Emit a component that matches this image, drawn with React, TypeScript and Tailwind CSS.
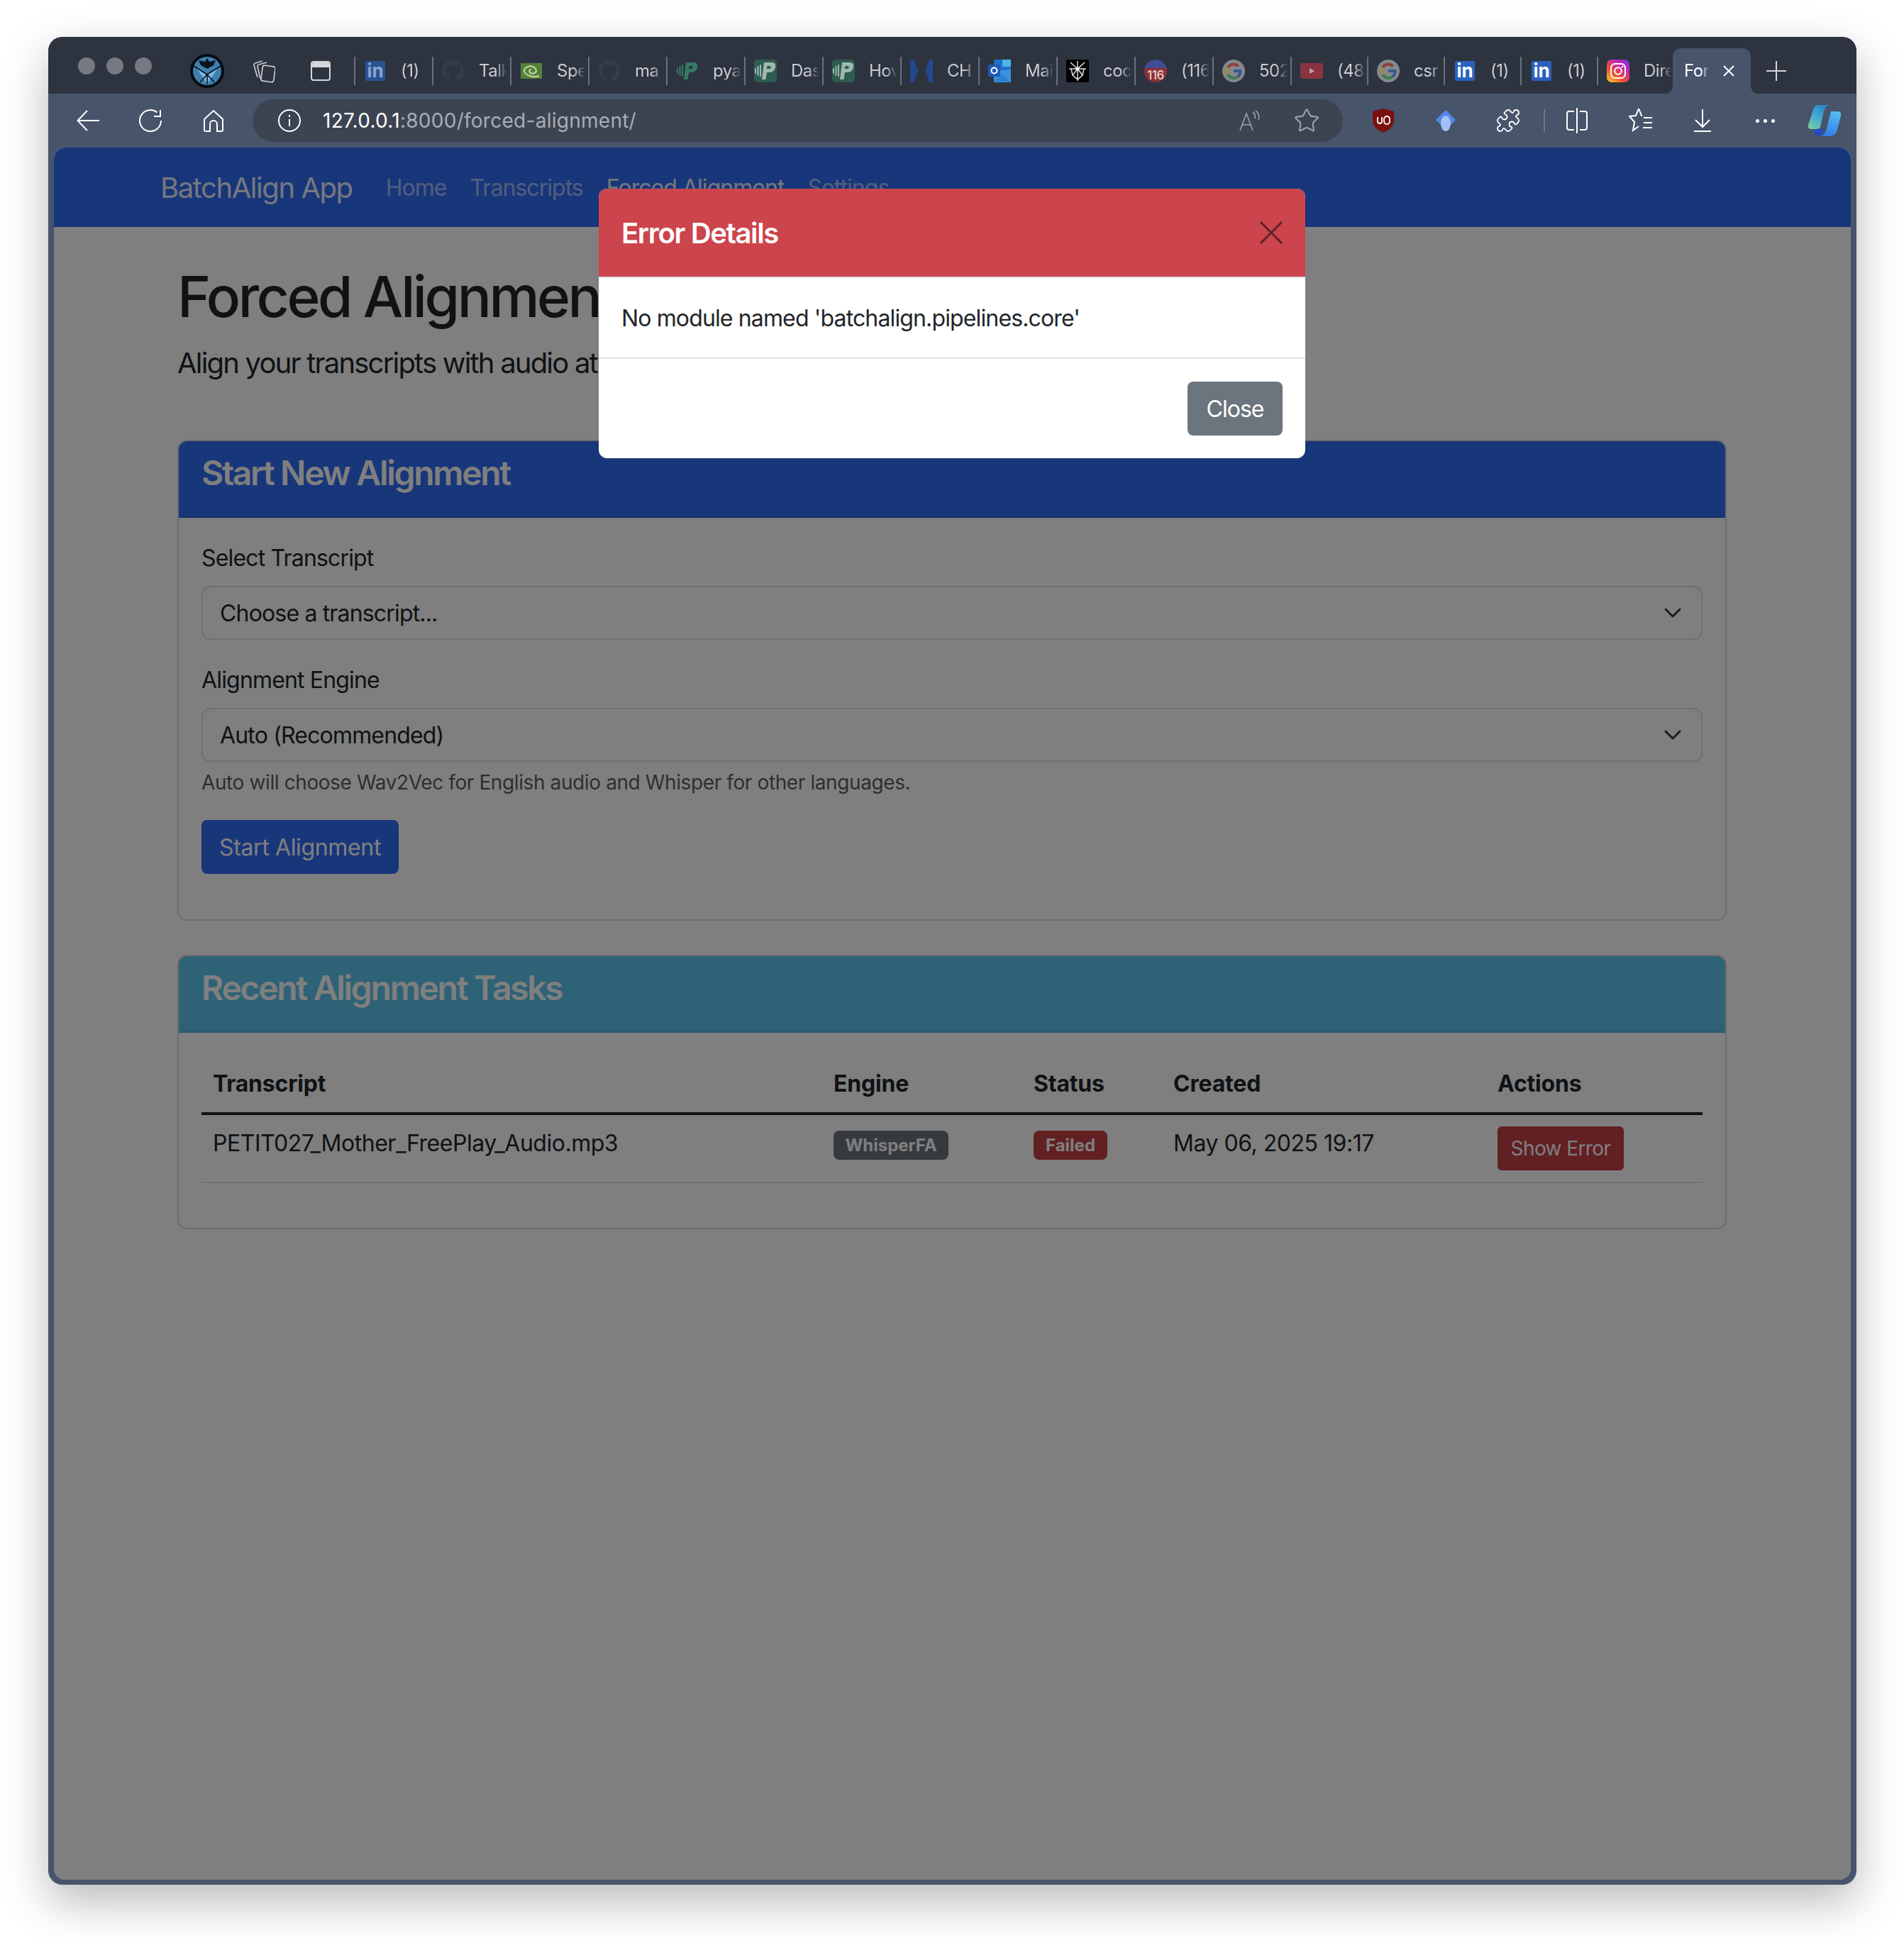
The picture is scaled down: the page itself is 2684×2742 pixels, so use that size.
import { FaGithub } from "react-icons/fa";
import { Puzzle, Star } from "lucide-react";
import type { ReactNode } from "react";

const sansFont = "font-['Inter','Liberation_Sans',sans-serif]";

function LinkedIn({ dim }: { dim?: boolean }) {
  return (
    <div
      className={
        dim
          ? "flex h-[28px] w-[28px] items-center justify-center rounded-[2px] bg-[#2b5292] text-[26px] font-bold leading-none tracking-normal text-[#8aa5cf]"
          : "flex h-[28px] w-[28px] items-center justify-center rounded-[2px] bg-[#2a62bc] text-[26px] font-bold leading-none tracking-normal text-white"
      }
    >
      in
    </div>
  );
}

function Nvidia() {
  return (
    <svg width="30" height="22" viewBox="0 0 30 22">
      <rect width="30" height="22" fill="#55803a" />
      <path d="M26 18C15 22 4 15 5 10 7 4 16 2 21 8c3 5-3 8-7 6-3-2-2-5 1-5" fill="none" stroke="#c3dca3" strokeWidth="2" />
    </svg>
  );
}

function PLogo({ tile }: { tile?: boolean }) {
  return (
    <svg width="32" height="32" viewBox="0 0 32 32">
      {tile && <rect width="32" height="32" rx="5" fill="#2f5c50" />}
      <g fill={tile ? "#9fb8ad" : "#347a63"}>
        <path
          fillRule="evenodd"
          d="M14 4h11c4 0 6 3 5 7s-4 7-8 7h-4l-1.5 10H11l3-24zm4.5 5l-.8 4h4.3c2 0 2.5-4 .5-4z"
        />
        <rect x="1" y="12" width="2" height="8" rx="1" />
        <rect x="4.5" y="9" width="2" height="14" rx="1" />
        <rect x="8" y="7" width="2" height="17" rx="1" />
      </g>
    </svg>
  );
}

function SplitBlue() {
  return (
    <svg width="32" height="32" viewBox="0 0 32 32">
      <path d="M0 0h6l3 12 3 5-4 5-2 10H0z" fill="#24478f" />
      <path d="M32 0h-5l-4 12-2 5 3 5 3 10h5z" fill="#24478f" />
    </svg>
  );
}

function Outlook() {
  return (
    <svg width="32" height="32" viewBox="0 0 32 32">
      <rect x="8" y="0" width="24" height="30" rx="2" fill="#1f6fc5" />
      <rect x="20" y="0" width="12" height="10" fill="#4fb6ec" />
      <path d="M8 16l24-2v18H8z" fill="#3d93dd" />
      <path d="M8 30l12-10 12 12z" fill="#2a83d1" />
      <rect x="0" y="7" width="17" height="17" rx="2" fill="#1c5bb8" />
      <circle cx="8.5" cy="15.5" r="4" fill="none" stroke="#fff" strokeWidth="2" />
    </svg>
  );
}

function SpiderTile() {
  return (
    <svg width="32" height="32" viewBox="0 0 32 32">
      <rect width="32" height="32" rx="2" fill="#000" />
      <g fill="none" stroke="#e8e8e8" strokeWidth="1.4">
        <path d="M16 2v28M6 4l10 9 10-9M4 13h24M7 13l2 9 7 6 7-6 2-9M9 22l7-9 7 9" />
      </g>
      <circle cx="16" cy="13" r="2.6" fill="#fff" />
    </svg>
  );
}

function Badge116() {
  return (
    <div className="relative h-[32px] w-[32px] overflow-hidden rounded-full bg-[#3f4d95]">
      <div className="absolute bottom-0 left-0 flex h-[20px] w-full items-center justify-center rounded-b-[14px] bg-[#8c3034] text-[17px] font-medium leading-none tracking-[-0.5px] text-[#e8d4d4]">
        116
      </div>
    </div>
  );
}

function GoogleG() {
  return (
    <svg width="32" height="32" viewBox="0 0 32 32" fill="none" strokeWidth="4">
      <circle cx="16" cy="16" r="16" fill="#85888e" />
      <path d="M22.5 9.5A9.5 9.5 0 0 0 8 11" stroke="#8a4038" />
      <path d="M8 11a9.5 9.5 0 0 0 0 10" stroke="#9c8c3c" />
      <path d="M8 21a9.5 9.5 0 0 0 14 3" stroke="#3f7a4e" />
      <path d="M22 24a9.5 9.5 0 0 0 3.5-8H16" stroke="#35588f" />
    </svg>
  );
}

function YouTube() {
  return (
    <svg width="32" height="22" viewBox="0 0 32 22">
      <rect width="32" height="22" rx="4" fill="#8b3340" />
      <path d="M13 7l7 4-7 4z" fill="#c5a0a5" />
    </svg>
  );
}

function Instagram() {
  return (
    <svg width="32" height="32" viewBox="0 0 32 32">
      <defs>
        <linearGradient id="ig" x1="0.1" y1="1" x2="0.9" y2="0">
          <stop offset="0" stopColor="#fdc72f" />
          <stop offset="0.35" stopColor="#f0512f" />
          <stop offset="0.7" stopColor="#c928b0" />
          <stop offset="1" stopColor="#7a35e0" />
        </linearGradient>
      </defs>
      <rect width="32" height="32" rx="7" fill="url(#ig)" />
      <rect x="6" y="6" width="20" height="20" rx="5.5" fill="none" stroke="#fff" strokeWidth="2" />
      <circle cx="16" cy="16" r="4.8" fill="none" stroke="#fff" strokeWidth="2" />
      <circle cx="22" cy="10" r="1.3" fill="#fff" />
    </svg>
  );
}

function GithubDark() {
  return <FaGithub className="h-[32px] w-[32px] text-[#353c48]" />;
}

type TabItem = { icon: ReactNode; label: string; narrow?: boolean };

const tabs: TabItem[] = [
  { icon: <LinkedIn dim />, label: "(1)" },
  { icon: <GithubDark />, label: "Talk" },
  { icon: <Nvidia />, label: "Spe" },
  { icon: <GithubDark />, label: "ma" },
  { icon: <PLogo />, label: "pya" },
  { icon: <PLogo tile />, label: "Das" },
  { icon: <PLogo tile />, label: "Hov" },
  { icon: <SplitBlue />, label: "CH" },
  { icon: <Outlook />, label: "Mai" },
  { icon: <SpiderTile />, label: "coo" },
  { icon: <Badge116 />, label: "(116" },
  { icon: <GoogleG />, label: "502" },
  { icon: <YouTube />, label: "(48", narrow: true },
  { icon: <GoogleG />, label: "csr", narrow: true },
  { icon: <LinkedIn />, label: "(1)", narrow: true },
  { icon: <LinkedIn />, label: "(1)", narrow: true },
  { icon: <Instagram />, label: "Dire", narrow: true },
];

function Tab({ tab }: { tab: TabItem }) {
  return (
    <div
      className={
        tab.narrow
          ? "flex h-[40px] w-[108px] shrink-0 items-center border-l-2 border-[#6a717d] pl-[12px]"
          : "flex h-[40px] w-[110px] shrink-0 items-center border-l-2 border-[#6a717d] pl-[12px]"
      }
    >
      <div className="flex w-[32px] shrink-0 justify-center">{tab.icon}</div>
      <div className="ml-[20px] w-[40px] overflow-hidden whitespace-nowrap text-[24px] leading-none tracking-[-0.5px] text-[#c9ccd1] [mask-image:linear-gradient(to_right,black_60%,transparent)]">
        {tab.label}
      </div>
    </div>
  );
}

function TabStrip() {
  return (
    <div className="flex h-[80px] shrink-0 items-center bg-[#2d3440] pt-[16px]">
      <div className="mb-[14px] ml-[42px] flex gap-[16px]">
        <div className="h-[24px] w-[24px] rounded-full bg-[#757982]" />
        <div className="h-[24px] w-[24px] rounded-full bg-[#757982]" />
        <div className="h-[24px] w-[24px] rounded-full bg-[#757982]" />
      </div>
      <svg className="ml-[54px] shrink-0" width="48" height="48" viewBox="0 0 48 48">
        <circle cx="24" cy="24" r="24" fill="#060a12" />
        <circle cx="24" cy="24" r="20" fill="#3f7fae" />
        <path d="M24 6l3 5 9-2-3 7-9 5-9-5-3-7 9 2z" fill="#0b1420" />
        <path d="M9 20l15 22 15-22-15 9z" fill="#7dbbe2" />
        <path d="M24 29v14M5 17l19 12 19-12M14 40l10-11 10 11" stroke="#0b1420" strokeWidth="1.6" fill="none" />
      </svg>
      <svg className="ml-[40px] shrink-0" width="32" height="34" viewBox="0 0 32 34" fill="none" stroke="#c9ccd1" strokeWidth="1.7">
        <rect x="13" y="10" width="18" height="22" rx="3" transform="rotate(8 22 21)" />
        <path d="M7 26L2 9c0-2 1-3 2-3l10-3M11 28L7 11c0-2 1-3 2-3l11-3" />
      </svg>
      <div className="ml-[50px] h-[28px] w-[28px] shrink-0 overflow-hidden rounded-[4px] border-2 border-[#d5d7da]">
        <div className="h-[7px] bg-[#d5d7da]" />
      </div>
      <div className="ml-[33px] flex">
        {tabs.map((tab, i) => (
          <Tab key={i} tab={tab} />
        ))}
      </div>
      <div className="relative ml-[-1px] flex h-[64px] w-[110px] shrink-0 items-center rounded-t-[12px] bg-[#47546a] pl-[16px]">
        <span className="absolute bottom-0 left-[-10px] h-[10px] w-[10px] bg-[radial-gradient(circle_at_0_0,transparent_9.5px,#47546a_10px)]" />
        <span className="absolute bottom-0 right-[-10px] h-[10px] w-[10px] bg-[radial-gradient(circle_at_100%_0,transparent_9.5px,#47546a_10px)]" />
        <div className="w-[36px] overflow-hidden whitespace-nowrap text-[24px] leading-none tracking-[-0.5px] text-white [mask-image:linear-gradient(to_right,black_65%,transparent)]">
          Forc
        </div>
        <svg className="ml-[18px]" width="18" height="18" viewBox="0 0 18 18" stroke="#fff" strokeWidth="2">
          <path d="M2 2l14 14M16 2L2 16" />
        </svg>
      </div>
      <svg className="ml-[22px]" width="28" height="28" viewBox="0 0 28 28" stroke="#d5d7da" strokeWidth="2">
        <path d="M14 0v28M0 14h28" />
      </svg>
    </div>
  );
}

function Toolbar() {
  return (
    <div className="flex h-[76px] shrink-0 items-center bg-[#47546a]">
      <svg className="ml-[40px] shrink-0" width="32" height="30" viewBox="0 0 32 30" fill="none" stroke="#fff" strokeWidth="2">
        <path d="M32 15H1.5M15 1L1.5 15 15 29" />
      </svg>
      <svg className="ml-[56px] shrink-0" width="32" height="32" viewBox="0 0 32 32" fill="none" stroke="#fff" strokeWidth="2">
        <path d="M25.5 4.5A15 15 0 1 0 31 16M21 10h9V1" />
      </svg>
      <svg className="ml-[58px] shrink-0" width="30" height="32" viewBox="0 0 30 32" fill="none" stroke="#fff" strokeWidth="2">
        <path d="M2 14L15 2l13 12v15a2 2 0 0 1-2 2h-6V21a5 5 0 0 0-10 0v10H4a2 2 0 0 1-2-2z" />
      </svg>
      <div className="ml-[40px] flex h-[60px] w-[1537px] shrink-0 items-center rounded-full bg-[#3c4452] pl-[36px] pr-[32px]">
        <svg width="32" height="32" viewBox="0 0 32 32" fill="none" stroke="#fff" strokeWidth="2">
          <circle cx="16" cy="16" r="15" />
          <path d="M16 14v10M16 8v3" />
        </svg>
        <div className="ml-[31px] text-[28px] leading-none tracking-[0.27px] text-[#a9adb3]">
          <span className="text-white">127.0.0.1</span>:8000/forced-alignment/
        </div>
        <svg className="ml-auto" width="30" height="30" viewBox="0 0 30 30" fill="none" stroke="#9ea2a8" strokeWidth="1.6">
          <path d="M1 29L10 5l9 24M4 21h12M19 3c3 2 4 5 3 9M23 1c4 3 6 8 4 13" />
        </svg>
        <Star className="ml-[46px] shrink-0 text-[#9ea2a8]" size={38} strokeWidth={1.3} />
      </div>
      <svg className="ml-[42px] shrink-0" width="30" height="34" viewBox="0 0 30 34">
        <path d="M15 0l15 4v13c0 8-7 14-15 17C7 31 0 25 0 17V4z" fill="#7a1010" />
        <path d="M7 12v6a3 3 0 0 0 6 0v-6M16 15a4 4 0 1 1 8 0v3a4 4 0 1 1-8 0z" fill="none" stroke="#fff" strokeWidth="1.8" />
      </svg>
      <svg className="ml-[59px] shrink-0" width="28" height="30" viewBox="0 0 28 30">
        <path d="M14 0l14 14-14 14L0 14z" fill="#5586e8" />
        <ellipse cx="14" cy="19" rx="7" ry="11" fill="#a4c0f4" />
      </svg>
      <Puzzle className="ml-[56px] shrink-0 text-white" size={36} strokeWidth={1.2} />
      <div className="ml-[32px] h-[32px] w-[2px] shrink-0 bg-[#717a8a]" />
      <svg className="ml-[30px] shrink-0" width="30" height="36" viewBox="0 0 30 36" fill="none" stroke="#fff" strokeWidth="2">
        <path d="M11 5H4a3 3 0 0 0-3 3v20a3 3 0 0 0 3 3h7M19 5h7a3 3 0 0 1 3 3v20a3 3 0 0 1-3 3h-7M15 0v36" />
      </svg>
      <svg className="ml-[58px] shrink-0" width="34" height="36" viewBox="0 0 34 36" fill="none" stroke="#fff" strokeWidth="2">
        <path d="M14 1l4 10h-1M14 1L10 11 1 12l7 8-2 12 8-6M21 14h12M21 21h12M20 28h13" />
      </svg>
      <svg className="ml-[58px] shrink-0" width="24" height="32" viewBox="0 0 24 32" fill="none" stroke="#fff" strokeWidth="2">
        <path d="M12 0v25M2 15l10 10 10-10M0 31h24" />
      </svg>
      <div className="ml-[63px] flex w-[27px] shrink-0 justify-between">
        <div className="h-[5px] w-[5px] rounded-full bg-white" />
        <div className="h-[5px] w-[5px] rounded-full bg-white" />
        <div className="h-[5px] w-[5px] rounded-full bg-white" />
      </div>
      <svg className="ml-[46px] shrink-0" width="48" height="44" viewBox="0 0 48 44">
        <defs>
          <linearGradient id="cp1" x1="0" y1="1" x2="0.6" y2="0">
            <stop offset="0" stopColor="#7fd39a" />
            <stop offset="0.55" stopColor="#46a9d6" />
            <stop offset="1" stopColor="#2b88c4" />
          </linearGradient>
          <linearGradient id="cp2" x1="0.4" y1="1" x2="0.7" y2="0">
            <stop offset="0" stopColor="#2f7fe8" />
            <stop offset="1" stopColor="#55bdf0" />
          </linearGradient>
        </defs>
        <path d="M14 0h19c-5 0-8 3-10 9l-5 22c-1 2-3 3-6 3H5c-3 0-5-3-4-6L8 7c1-4 3-7 6-7z" fill="url(#cp1)" />
        <path d="M17 44h14c6 0 9-3 11-9l5-20c1-4-1-6-5-6h-9l-6 24c-1 6-5 11-10 11z" fill="url(#cp2)" />
        <path d="M17 44c3-2 5-5 6-10H9c0 5 3 10 8 10z" fill="#2949c9" />
      </svg>
    </div>
  );
}

function CardHeader({ title, info }: { title: string; info?: boolean }) {
  return (
    <div
      className={
        info
          ? "rounded-t-[12px] border-b-2 border-[#54afd2] bg-[#5cc4ec] px-[32px] pb-[32px] pt-[16px]"
          : "rounded-t-[12px] border-b-2 border-[#2a60d8] bg-[#306cf4] px-[32px] pb-[32px] pt-[16px]"
      }
    >
      <h4 className="text-[48px] font-semibold leading-[58px] tracking-[-0.048em] text-white">{title}</h4>
    </div>
  );
}

function SelectBox({ value }: { value: string }) {
  return (
    <div className="flex h-[76px] items-center justify-between rounded-[12px] border-2 border-[#dee2e6] bg-white pl-[24px] pr-[24px] text-[32px] tracking-[-0.026em] text-[#212529]">
      <span className="pt-[2px]">{value}</span>
      <svg width="32" height="32" viewBox="0 0 16 16" fill="none" stroke="#343a40" strokeWidth="1.5" strokeLinecap="round" strokeLinejoin="round">
        <path d="M3 5.5l5 5 5-5" />
      </svg>
    </div>
  );
}

function AlignmentForm() {
  return (
    <div className="rounded-[14px] border-2 border-[#d8d8d8] bg-white">
      <CardHeader title="Start New Alignment" />
      <div className="p-[32px]">
        <div className="mb-[14px] text-[32px] leading-[50px] tracking-[-0.026em]">Select Transcript</div>
        <div className="mb-[32px]">
          <SelectBox value="Choose a transcript..." />
        </div>
        <div className="mb-[14px] text-[32px] leading-[50px] tracking-[-0.026em]">Alignment Engine</div>
        <SelectBox value="Auto (Recommended)" />
        <div className="mb-[32px] mt-[8px] text-[28px] leading-[42px] tracking-[-0.014em] text-[#212529]/75">
          Auto will choose Wav2Vec for English audio and Whisper for other languages.
        </div>
        <div className="mb-[32px] flex h-[76px] w-[278px] items-center justify-center rounded-[8px] bg-[#306cf4] pt-[2px] text-[32px] text-white">
          Start Alignment
        </div>
      </div>
    </div>
  );
}

function TasksTable() {
  return (
    <div className="mt-[48px] rounded-[14px] border-2 border-[#d8d8d8] bg-white">
      <CardHeader title="Recent Alignment Tasks" info />
      <div className="p-[32px]">
        <table className="mb-[31px] w-full table-fixed border-collapse text-[32px] leading-[48px] tracking-[-0.015em]">
          <thead>
            <tr className="border-b-4 border-[#212529] text-left tracking-[-0.2px]">
              <th className="w-[875px] p-[16px] font-bold">Transcript</th>
              <th className="w-[282px] p-[16px] font-bold">Engine</th>
              <th className="w-[197px] p-[16px] font-bold">Status</th>
              <th className="w-[457px] p-[16px] font-bold">Created</th>
              <th className="p-[16px] font-bold">Actions</th>
            </tr>
          </thead>
          <tbody>
            <tr className="border-b-2 border-[#dee2e6] align-top">
              <td className="p-[16px]">PETIT027_Mother_FreePlay_Audio.mp3</td>
              <td className="p-[16px]">
                <span className="mt-[6px] flex h-[41px] w-[162px] items-center justify-center rounded-[8px] bg-[#6c757d] text-[24px] font-bold leading-none tracking-normal text-white">
                  WhisperFA
                </span>
              </td>
              <td className="p-[16px]">
                <span className="mt-[6px] flex h-[41px] w-[104px] items-center justify-center rounded-[8px] bg-[#c44046] text-[24px] font-bold leading-none tracking-normal text-white">
                  Failed
                </span>
              </td>
              <td className="p-[16px]">May 06, 2025 19:17</td>
              <td className="p-[16px]">
                <div className="flex h-[62px] w-[178px] items-center justify-center rounded-[6px] bg-[#c44046] text-[28px] leading-none tracking-[-0.6px] text-white">
                  Show Error
                </div>
              </td>
            </tr>
          </tbody>
        </table>
      </div>
    </div>
  );
}

function ErrorModal() {
  return (
    <div className="absolute inset-0 flex justify-center pr-[1px] pt-[58px]">
      <div className="h-[380px] w-[996px] overflow-hidden rounded-[12px] bg-white">
        <div className="flex h-[126px] items-center justify-between border-b-2 border-[#dee2e6] bg-[#cc444c] pl-[32px] pr-[32px]">
          <div className="pt-[2px] text-[40px] font-semibold leading-none tracking-[-0.034em] text-white">Error Details</div>
          <svg width="32" height="32" viewBox="0 0 32 32" stroke="#5e2227" strokeWidth="3">
            <path d="M1 1l30 30M31 1L1 31" />
          </svg>
        </div>
        <div className="flex h-[114px] items-center border-b-2 border-[#dee2e6] px-[32px] pt-[2px] text-[32px] tracking-[-0.027em] text-[#212529]">
          No module named 'batchalign.pipelines.core'
        </div>
        <div className="flex justify-end px-[32px] pt-[32px]">
          <div className="flex h-[76px] w-[134px] items-center justify-center rounded-[8px] bg-[#6c757d] pt-[2px] text-[32px] tracking-[-0.03em] text-white">
            Close
          </div>
        </div>
      </div>
    </div>
  );
}

export default function App() {
  return (
    <div className={`${sansFont} h-[2742px] w-[2684px] overflow-hidden bg-white pl-[68px] pt-[52px] tracking-[-0.022em] text-[#212529]`}>
      <div className="flex h-[2605px] w-[2549px] flex-col overflow-hidden rounded-[20px] bg-[#47546a] shadow-[0_24px_64px_rgba(0,0,0,0.28)]">
        <TabStrip />
        <Toolbar />
        <div className="relative mx-[8px] mb-[7px] flex-1 overflow-hidden rounded-[16px] bg-white">
          <nav className="flex h-[112px] items-center bg-[#306cf4] pl-[150px] pt-[2px] text-[32px] tracking-[-0.03em]">
            <div className="text-[40px] tracking-[-0.036em] text-white/90">BatchAlign App</div>
            <div className="ml-[47px] text-white/55">Home</div>
            <div className="ml-[33px] text-white/55">Transcripts</div>
            <div className="ml-[33px] text-white/90">Forced Alignment</div>
            <div className="ml-[33px] text-white/55">Settings</div>
          </nav>
          <div className="ml-[174px] mr-[175px] pt-[50px]">
            <h1 className="mb-[16px] text-[80px] font-medium leading-[96px] tracking-[-0.043em]">Forced Alignment</h1>
            <p className="mb-[78px] text-[40px] leading-[60px] tracking-[-0.045em]">Align your transcripts with audio at the word level</p>
            <AlignmentForm />
            <TasksTable />
          </div>
          <div className="absolute inset-0 bg-black/50" />
          <ErrorModal />
        </div>
      </div>
    </div>
  );
}
